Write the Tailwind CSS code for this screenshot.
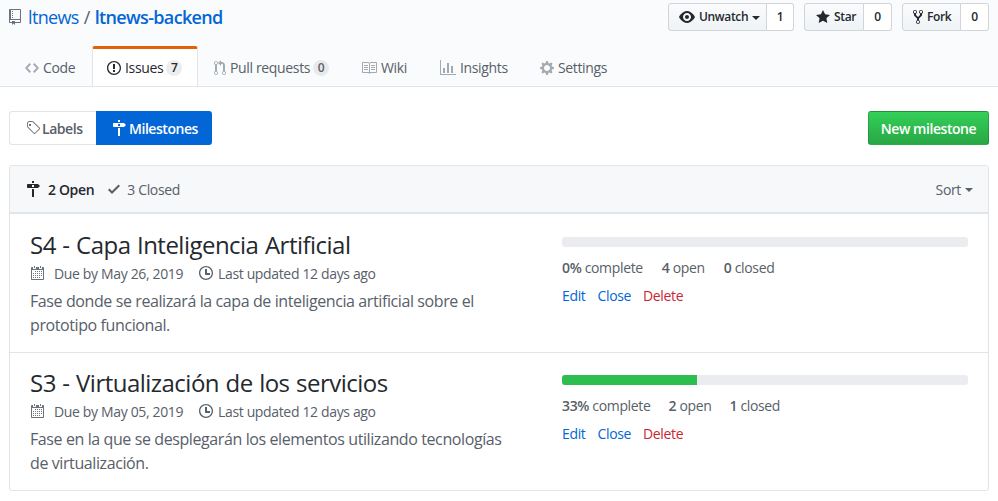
<!DOCTYPE html>
<html lang="en">
<head>
  <meta charset="UTF-8">
  <title>Milestones</title>
  <script src="https://cdn.jsdelivr.net/npm/@tailwindcss/browser@4"></script>
</head>
<body class="bg-white font-['Open_Sans',sans-serif] text-[14px] text-[#24292e] h-[501px] overflow-hidden tracking-[-0.35px]">
  <!-- repo header -->
  <div class="bg-[#fafbfc] border-b border-[#e1e4e8] h-[87px] px-[9px] flex flex-col">
    <div class="flex justify-between h-[44px]">
      <h1 class="flex items-center h-[34px] text-[18px] text-[#0366d6] tracking-[-0.65px]">
        <svg class="w-[12px] h-[16px] mr-[7px] fill-[#6a737d]" viewBox="0 0 12 16"><path d="M4 9H3V8h1v1zm0-3H3v1h1V6zm0-2H3v1h1V4zm0-2H3v1h1V2zm8-1v12c0 .55-.45 1-1 1H6v2l-1.5-1.5L3 16v-2H1c-.55 0-1-.45-1-1V1c0-.55.45-1 1-1h10c.55 0 1 .45 1 1zm-1 10H1v2h2v-1h3v1h5v-2zm0-10H2v9h9V1z"/></svg>
        <a>ltnews</a><span class="text-[#586069] mx-[5px]">/</span><a class="font-semibold">ltnews-backend</a>
      </h1>
      <div class="flex pt-[3px] text-[12px] font-semibold">
        <div class="flex h-[28px] mr-[10px]">
          <span class="flex items-center w-[99px] pl-[10px] border border-[#d1d5da] rounded-l-[3px] bg-gradient-to-b from-[#fafbfc] to-[#eff3f6]">
            <svg class="w-[16px] h-[16px] mr-[4px] fill-[#24292e]" viewBox="0 0 16 16"><path d="M8.06 2C3 2 0 8 0 8s3 6 8.06 6C13 14 16 8 16 8s-3-6-7.94-6zM8 12c-2.2 0-4-1.78-4-4 0-2.2 1.8-4 4-4 2.22 0 4 1.8 4 4 0 2.22-1.78 4-4 4zm2-4c0 1.11-.89 2-2 2-1.11 0-2-.89-2-2 0-1.11.89-2 2-2 1.11 0 2 .89 2 2z"/></svg>
            Unwatch<i class="ml-[4px] mt-[1px] border-x-[4px] border-x-transparent border-t-[4px] border-t-[#24292e]"></i>
          </span>
          <span class="flex items-center justify-center w-[27px] bg-white border border-l-0 border-[#d1d5da] rounded-r-[3px]">1</span>
        </div>
        <div class="flex h-[28px] mr-[10px]">
          <span class="flex items-center w-[60px] pl-[11px] border border-[#d1d5da] rounded-l-[3px] bg-gradient-to-b from-[#fafbfc] to-[#eff3f6]">
            <svg class="w-[14px] h-[16px] mr-[4px] fill-[#24292e]" viewBox="0 0 14 16"><path d="M14 6l-4.9-.64L7 1 4.9 5.36 0 6l3.6 3.26L2.67 14 7 11.67 11.33 14l-.93-4.74L14 6z"/></svg>
            Star
          </span>
          <span class="flex items-center justify-center w-[28px] bg-white border border-l-0 border-[#d1d5da] rounded-r-[3px]">0</span>
        </div>
        <div class="flex h-[28px]">
          <span class="flex items-center w-[59px] pl-[10px] border border-[#d1d5da] rounded-l-[3px] bg-gradient-to-b from-[#fafbfc] to-[#eff3f6]">
            <svg class="w-[10px] h-[16px] mr-[4px] fill-[#24292e]" viewBox="0 0 10 16"><path d="M8 1a1.993 1.993 0 0 0-1 3.72V6L5 8 3 6V4.72A1.993 1.993 0 0 0 2 1a1.993 1.993 0 0 0-1 3.72V6.5l3 3v1.78A1.993 1.993 0 0 0 5 15a1.993 1.993 0 0 0 1-3.72V9.5l3-3V4.72A1.993 1.993 0 0 0 8 1zM2 4.2C1.34 4.2.8 3.65.8 3c0-.65.55-1.2 1.2-1.2.65 0 1.2.55 1.2 1.2 0 .65-.55 1.2-1.2 1.2zm3 10c-.66 0-1.2-.55-1.2-1.2 0-.65.55-1.2 1.2-1.2.65 0 1.2.55 1.2 1.2 0 .65-.55 1.2-1.2 1.2zm3-10c-.66 0-1.2-.55-1.2-1.2 0-.65.55-1.2 1.2-1.2.65 0 1.2.55 1.2 1.2 0 .65-.55 1.2-1.2 1.2z"/></svg>
            Fork
          </span>
          <span class="flex items-center justify-center w-[28px] bg-white border border-l-0 border-[#d1d5da] rounded-r-[3px]">0</span>
        </div>
      </div>
    </div>
    <nav class="flex h-[43px] text-[#586069]">
      <a class="flex items-center w-[83px] pl-[16px] pt-[6px]">
        <svg class="w-[14px] h-[16px] mr-[4px] fill-[#a3aab1]" viewBox="0 0 14 16"><path d="M9.5 3L8 4.5 11.5 8 8 11.5 9.5 13 14 8 9.5 3zm-5 0L0 8l4.5 5L6 11.5 2.5 8 6 4.5 4.5 3z"/></svg>
        Code
      </a>
      <a class="flex items-center w-[106px] h-[40px] pl-[14px] bg-white text-[#24292e] border-x border-[#e1e4e8] border-t-[3px] border-t-[#e36209] rounded-t-[3px] mt-[3px]">
        <svg class="w-[14px] h-[16px] mr-[4px] fill-[#24292e]" viewBox="0 0 14 16"><path d="M7 2.3c3.14 0 5.7 2.56 5.7 5.7s-2.56 5.7-5.7 5.7A5.71 5.71 0 0 1 1.3 8c0-3.14 2.56-5.7 5.7-5.7zM7 1C3.14 1 0 4.14 0 8s3.14 7 7 7 7-3.14 7-7-3.14-7-7-7zm1 3H6v5h2V4zm0 6H6v2h2v-2z"/></svg>
        Issues
        <span class="ml-[3px] w-[16px] h-[16px] rounded-full bg-[#1b1f23]/[0.08] text-[12px] font-semibold flex items-center justify-center">7</span>
      </a>
      <a class="flex items-center w-[145px] pl-[16px] pt-[6px]">
        <svg class="w-[12px] h-[16px] mr-[4px] fill-[#a3aab1]" viewBox="0 0 12 16"><path d="M11 11.28V5c-.03-.78-.34-1.47-.94-2.06C9.46 2.35 8.78 2.03 8 2H7V0L4 3l3 3V4h1c.27.02.48.11.69.31.21.2.3.42.31.69v6.28A1.993 1.993 0 0 0 10 15a1.993 1.993 0 0 0 1-3.72zm-1 2.92c-.66 0-1.2-.55-1.2-1.2 0-.65.55-1.2 1.2-1.2.65 0 1.2.55 1.2 1.2 0 .65-.55 1.2-1.2 1.2zM4 3c0-1.11-.89-2-2-2a1.993 1.993 0 0 0-1 3.72v6.56A1.993 1.993 0 0 0 2 15a1.993 1.993 0 0 0 1-3.72V4.72c.59-.34 1-.98 1-1.72zm-.8 10c0 .66-.55 1.2-1.2 1.2-.65 0-1.2-.55-1.2-1.2 0-.65.55-1.2 1.2-1.2.65 0 1.2.55 1.2 1.2zM2 4.2C1.34 4.2.8 3.65.8 3c0-.65.55-1.2 1.2-1.2.65 0 1.2.55 1.2 1.2 0 .65-.55 1.2-1.2 1.2z"/></svg>
        Pull requests
        <span class="ml-[3px] w-[16px] h-[16px] rounded-full bg-[#1b1f23]/[0.08] text-[12px] font-semibold flex items-center justify-center">0</span>
      </a>
      <a class="flex items-center w-[81px] pl-[18px] pt-[6px]">
        <svg class="w-[16px] h-[16px] mr-[4px] fill-[#a3aab1]" viewBox="0 0 16 16"><path d="M3 5h4v1H3V5zm0 3h4V7H3v1zm0 2h4V9H3v1zm11-5h-4v1h4V5zm0 2h-4v1h4V7zm0 2h-4v1h4V9zm2-6v9c0 .55-.45 1-1 1H9.5l-1 1-1-1H2c-.55 0-1-.45-1-1V3c0-.55.45-1 1-1h5.5l1 1 1-1H15c.55 0 1 .45 1 1zm-8 .5L7.5 3H2v9h6V3.5zm7-.5H9.5l-.5.5V12h6V3z"/></svg>
        Wiki
      </a>
      <a class="flex items-center w-[100px] pl-[16px] pt-[6px]">
        <svg class="w-[16px] h-[16px] mr-[4px] fill-[#a3aab1]" viewBox="0 0 16 16"><path d="M16 14v1H0V0h1v14h15zM5 13H3V8h2v5zm4 0H7V3h2v10zm4 0h-2V6h2v7z"/></svg>
        Insights
      </a>
      <a class="flex items-center pl-[16px] pt-[6px]">
        <svg class="w-[14px] h-[16px] mr-[4px] fill-[#a3aab1]" viewBox="0 0 14 16"><path d="M14 8.77v-1.6l-1.94-.64-.45-1.09.88-1.84-1.13-1.13-1.81.91-1.09-.45-.69-1.92h-1.6l-.63 1.94-1.11.45-1.84-.88-1.13 1.13.91 1.81-.45 1.09L0 7.23v1.59l1.94.64.45 1.09-.88 1.84 1.13 1.13 1.81-.91 1.09.45.69 1.92h1.59l.63-1.94 1.11-.45 1.84.88 1.13-1.13-.92-1.81.47-1.09L14 8.75v.02zM7 11c-1.66 0-3-1.34-3-3s1.34-3 3-3 3 1.34 3 3-1.34 3-3 3z"/></svg>
        Settings
      </a>
    </nav>
  </div>

  <div class="px-[9px] pt-[24px]">
    <!-- subnav -->
    <div class="flex justify-between h-[34px] font-semibold tracking-[-0.45px]">
      <div class="flex">
        <a class="flex items-center w-[87px] pl-[16px] border border-r-0 border-[#e1e4e8] rounded-l-[3px] text-[#586069]">
          <svg class="w-[15px] h-[16px] mr-[1px] fill-[#6a737d]" viewBox="0 0 15 16"><path d="M7.73 1.73C7.26 1.26 6.62 1 5.96 1H3.5C2.13 1 1 2.13 1 3.5v2.47c0 .66.27 1.3.73 1.77l6.06 6.06c.39.39 1.02.39 1.41 0l4.59-4.59a.996.996 0 0 0 0-1.41L7.73 1.73zM2.38 7.09c-.31-.3-.47-.7-.47-1.13V3.5c0-.88.72-1.59 1.59-1.59h2.47c.42 0 .83.16 1.13.47l6.14 6.13-4.73 4.73-6.13-6.15zM3 4h2v2H3V4z"/></svg>
          Labels
        </a>
        <a class="flex items-center w-[116px] pl-[16px] bg-[#0366d6] text-white rounded-r-[3px]">
          <svg class="w-[14px] h-[16px] mr-[3px] fill-white" viewBox="0 0 14 16"><path d="M8 2H6V0h2v2zm4 5H2c-.55 0-1-.45-1-1V4c0-.55.45-1 1-1h10l2 2-2 2zM8 4H6v2h2V4zM6 16h2V8H6v8z"/></svg>
          Milestones
        </a>
      </div>
      <a class="flex items-center justify-center w-[121px] text-white rounded-[3px] border border-[#1b1f23]/20 bg-gradient-to-b from-[#34d058] to-[#28a745]">New milestone</a>
    </div>

    <!-- milestone list -->
    <div class="mt-[20px] border border-[#e1e4e8] rounded-[3px]">
      <div class="flex items-center justify-between h-[48px] pl-[16px] pr-[15px] bg-[#f6f8fa] border-b-2 border-[#e1e4e8] rounded-t-[3px] text-[#586069]">
        <div class="flex items-center">
          <svg class="w-[14px] h-[16px] mr-[8px] fill-[#24292e]" viewBox="0 0 14 16"><path d="M8 2H6V0h2v2zm4 5H2c-.55 0-1-.45-1-1V4c0-.55.45-1 1-1h10l2 2-2 2zM8 4H6v2h2V4zM6 16h2V8H6v8z"/></svg>
          <span class="font-semibold text-[#24292e]">2 Open</span>
          <svg class="w-[12px] h-[16px] ml-[14px] mr-[7px] fill-[#586069]" viewBox="0 0 12 16"><path d="M12 5l-8 8-4-4 1.5-1.5L4 10l6.5-6.5L12 5z"/></svg>
          <span>3 Closed</span>
        </div>
        <span class="flex items-center">Sort<i class="ml-[4px] mt-[1px] border-x-[4px] border-x-transparent border-t-[4px] border-t-[#586069]"></i></span>
      </div>

      <div class="flex h-[139px] border-b border-[#e1e4e8] pt-[15px] pl-[20px]">
        <div class="w-[532px]">
          <h2 class="text-[24px] leading-[32px] tracking-[-0.52px] [word-spacing:0.8px]">S4 - Capa Inteligencia Artificial</h2>
          <div class="flex items-center h-[24px] text-[#586069]">
            <svg class="w-[14px] h-[16px] mr-[10px] fill-[#6a737d]" viewBox="0 0 14 16"><path d="M13 2h-1v1.5c0 .28-.22.5-.5.5h-2c-.28 0-.5-.22-.5-.5V2H6v1.5c0 .28-.22.5-.5.5h-2c-.28 0-.5-.22-.5-.5V2H2c-.55 0-1 .45-1 1v11c0 .55.45 1 1 1h11c.55 0 1-.45 1-1V3c0-.55-.45-1-1-1zm0 12H2V5h11v9zM5 3H4V1h1v2zm6 0h-1V1h1v2zM6 7H5V6h1v1zm2 0H7V6h1v1zm2 0H9V6h1v1zm2 0h-1V6h1v1zM4 9H3V8h1v1zm2 0H5V8h1v1zm2 0H7V8h1v1zm2 0H9V8h1v1zm2 0h-1V8h1v1zm-8 2H3v-1h1v1zm2 0H5v-1h1v1zm2 0H7v-1h1v1zm2 0H9v-1h1v1zm2 0h-1v-1h1v1zm-8 2H3v-1h1v1zm2 0H5v-1h1v1zm2 0H7v-1h1v1zm2 0H9v-1h1v1z"/></svg>
            <span class="w-[145px]">Due by May 26, 2019</span>
            <svg class="w-[14px] h-[16px] mr-[5px] fill-[#586069]" viewBox="0 0 14 16"><path d="M8 8h3v2H7c-.55 0-1-.45-1-1V4h2v4zM7 2.3c3.14 0 5.7 2.56 5.7 5.7s-2.56 5.7-5.7 5.7A5.71 5.71 0 0 1 1.3 8c0-3.14 2.56-5.7 5.7-5.7zM7 1C3.14 1 0 4.14 0 8s3.14 7 7 7 7-3.14 7-7-3.14-7-7-7z"/></svg>
            <span>Last updated 12 days ago</span>
          </div>
          <p class="mt-[4px] w-[480px] text-[16px] leading-[24px] tracking-[-0.4px] text-[#586069]">Fase donde se realizará la capa de inteligencia artificial sobre el prototipo funcional.</p>
        </div>
        <div class="w-[406px] pt-[8px]">
          <div class="h-[10px] bg-[#eaecef] rounded-[3px]"></div>
          <div class="flex h-[24px] mt-[8px] items-center text-[#586069]">
            <span class="mr-[19px]"><b class="font-semibold">0%</b> complete</span>
            <span class="mr-[19px]"><b class="font-semibold">4</b> open</span>
            <span><b class="font-semibold">0</b> closed</span>
          </div>
          <div class="flex gap-[12px] mt-[4px] h-[24px] items-center">
            <a class="text-[#0366d6]">Edit</a><a class="text-[#0366d6]">Close</a><a class="text-[#cb2431]">Delete</a>
          </div>
        </div>
      </div>

      <div class="flex h-[137px] pt-[14px] pl-[20px]">
        <div class="w-[532px]">
          <h2 class="text-[24px] leading-[32px] tracking-[-0.52px] [word-spacing:0.8px]">S3 - Virtualización de los servicios</h2>
          <div class="flex items-center h-[24px] text-[#586069]">
            <svg class="w-[14px] h-[16px] mr-[10px] fill-[#6a737d]" viewBox="0 0 14 16"><path d="M13 2h-1v1.5c0 .28-.22.5-.5.5h-2c-.28 0-.5-.22-.5-.5V2H6v1.5c0 .28-.22.5-.5.5h-2c-.28 0-.5-.22-.5-.5V2H2c-.55 0-1 .45-1 1v11c0 .55.45 1 1 1h11c.55 0 1-.45 1-1V3c0-.55-.45-1-1-1zm0 12H2V5h11v9zM5 3H4V1h1v2zm6 0h-1V1h1v2zM6 7H5V6h1v1zm2 0H7V6h1v1zm2 0H9V6h1v1zm2 0h-1V6h1v1zM4 9H3V8h1v1zm2 0H5V8h1v1zm2 0H7V8h1v1zm2 0H9V8h1v1zm2 0h-1V8h1v1zm-8 2H3v-1h1v1zm2 0H5v-1h1v1zm2 0H7v-1h1v1zm2 0H9v-1h1v1zm2 0h-1v-1h1v1zm-8 2H3v-1h1v1zm2 0H5v-1h1v1zm2 0H7v-1h1v1zm2 0H9v-1h1v1z"/></svg>
            <span class="w-[145px]">Due by May 05, 2019</span>
            <svg class="w-[14px] h-[16px] mr-[5px] fill-[#586069]" viewBox="0 0 14 16"><path d="M8 8h3v2H7c-.55 0-1-.45-1-1V4h2v4zM7 2.3c3.14 0 5.7 2.56 5.7 5.7s-2.56 5.7-5.7 5.7A5.71 5.71 0 0 1 1.3 8c0-3.14 2.56-5.7 5.7-5.7zM7 1C3.14 1 0 4.14 0 8s3.14 7 7 7 7-3.14 7-7-3.14-7-7-7z"/></svg>
            <span>Last updated 12 days ago</span>
          </div>
          <p class="mt-[4px] w-[480px] text-[16px] leading-[24px] tracking-[-0.4px] text-[#586069]">Fase en la que se desplegarán los elementos utilizando tecnologías de virtualización.</p>
        </div>
        <div class="w-[406px] pt-[8px]">
          <div class="h-[10px] bg-[#eaecef] rounded-[3px] overflow-hidden"><div class="h-full bg-[#2cbe4e]" style="width:33.33%"></div></div>
          <div class="flex h-[24px] mt-[8px] items-center text-[#586069]">
            <span class="mr-[18px]"><b class="font-semibold">33%</b> complete</span>
            <span class="mr-[18px]"><b class="font-semibold">2</b> open</span>
            <span><b class="font-semibold">1</b> closed</span>
          </div>
          <div class="flex gap-[12px] mt-[4px] h-[24px] items-center">
            <a class="text-[#0366d6]">Edit</a><a class="text-[#0366d6]">Close</a><a class="text-[#cb2431]">Delete</a>
          </div>
        </div>
      </div>
    </div>
  </div>
</body>
</html>
